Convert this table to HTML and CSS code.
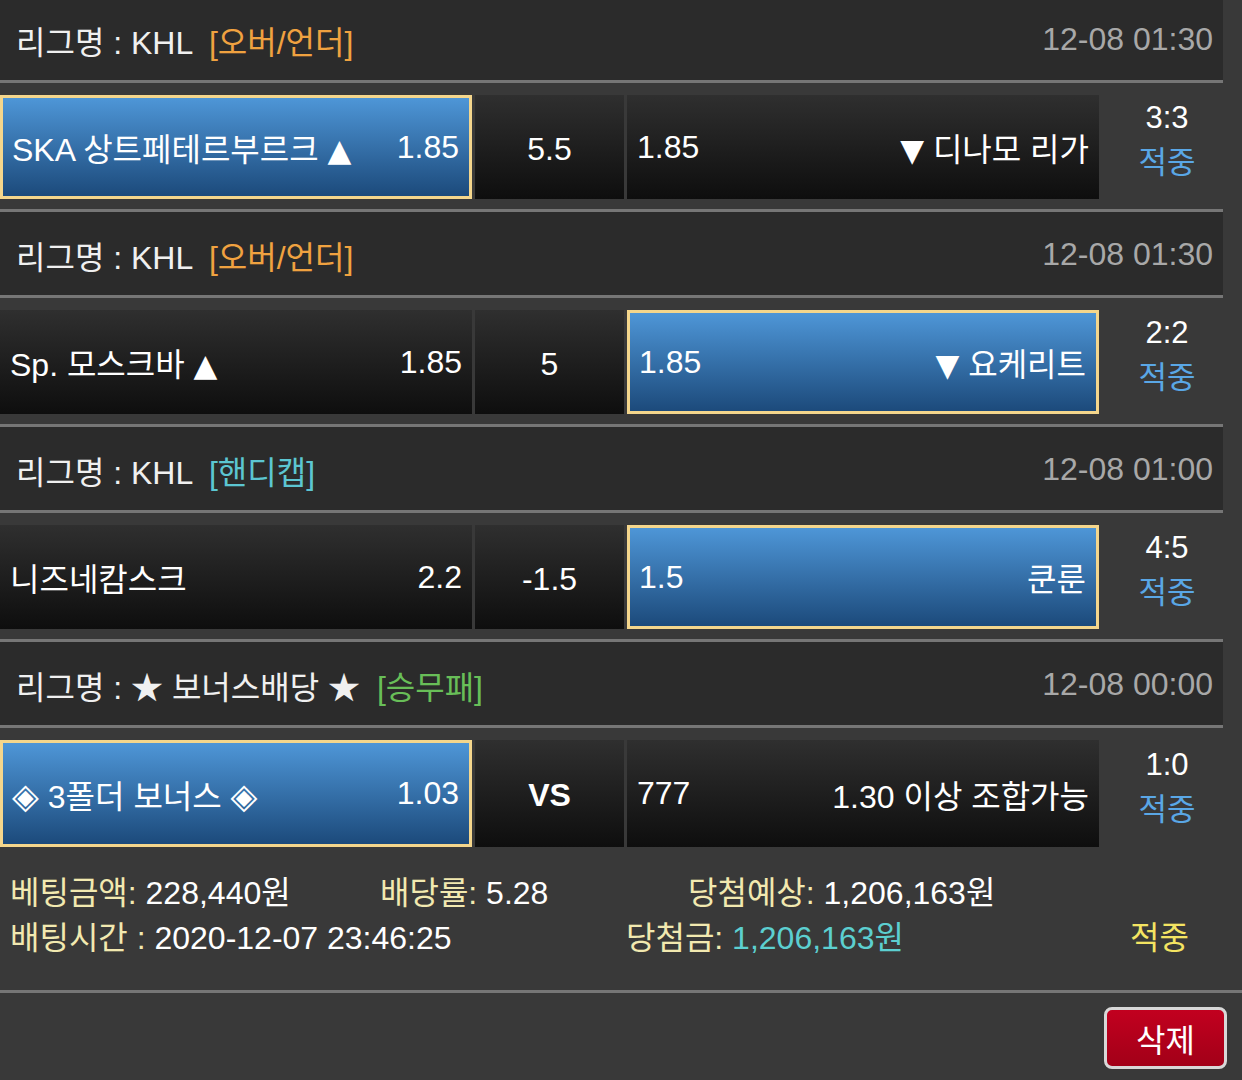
FILE: index.html
```html
<!DOCTYPE html>
<html>
<head>
    <meta charset="utf-8">
    <title>배팅내역</title>
    <link rel="stylesheet" href="styles.css">
</head>
<body>
    <div class="bet-list">
        <div class="league-head">
            <div class="league">리그명 : KHL <span class="type over">[오버/언더]</span></div>
            <div class="date">12-08 01:30</div>
        </div>
        <div class="match">
            <div class="pick on"><span>SKA 상트페테르부르크 <span class="mark">▲</span></span><span>1.85</span></div>
            <div class="line">5.5</div>
            <div class="pick"><span>1.85</span><span><span class="mark">▼</span> 디나모 리가</span></div>
            <div class="result"><span class="score">3:3</span><span class="hit">적중</span></div>
        </div>

        <div class="league-head">
            <div class="league">리그명 : KHL <span class="type over">[오버/언더]</span></div>
            <div class="date">12-08 01:30</div>
        </div>
        <div class="match">
            <div class="pick"><span>Sp. 모스크바 <span class="mark">▲</span></span><span>1.85</span></div>
            <div class="line">5</div>
            <div class="pick on"><span>1.85</span><span><span class="mark">▼</span> 요케리트</span></div>
            <div class="result"><span class="score">2:2</span><span class="hit">적중</span></div>
        </div>

        <div class="league-head">
            <div class="league">리그명 : KHL <span class="type handi">[핸디캡]</span></div>
            <div class="date">12-08 01:00</div>
        </div>
        <div class="match">
            <div class="pick"><span>니즈네캄스크</span><span>2.2</span></div>
            <div class="line">-1.5</div>
            <div class="pick on"><span>1.5</span><span>쿤룬</span></div>
            <div class="result"><span class="score">4:5</span><span class="hit">적중</span></div>
        </div>

        <div class="league-head">
            <div class="league">리그명 : ★ 보너스배당 ★ <span class="type wdl">[승무패]</span></div>
            <div class="date">12-08 00:00</div>
        </div>
        <div class="match last">
            <div class="pick on"><span><span class="mark gem">◈</span> 3폴더 보너스 <span class="mark gem">◈</span></span><span>1.03</span></div>
            <div class="line vs">VS</div>
            <div class="pick"><span>777</span><span>1.30 이상 조합가능</span></div>
            <div class="result"><span class="score">1:0</span><span class="hit">적중</span></div>
        </div>
    </div>

    <div class="summary">
        <div class="sum-row">
            <div class="sum-item w1"><span class="label">베팅금액:</span> 228,440원</div>
            <div class="sum-item w2"><span class="label">배당률:</span> 5.28</div>
            <div class="sum-item"><span class="label">당첨예상:</span> 1,206,163원</div>
        </div>
        <div class="sum-row">
            <div class="sum-item w3"><span class="label">배팅시간 :</span> 2020-12-07 23:46:25</div>
            <div class="sum-item w4"><span class="label">당첨금:</span> <span class="win">1,206,163원</span></div>
            <div class="sum-item status">적중</div>
        </div>
    </div>

    <div class="actions">
        <button class="btn-delete">삭제</button>
    </div>
</body>
</html>
```
FILE: styles.css
```css
* {
    margin: 0;
    padding: 0;
    box-sizing: border-box;
}
body {
    font-family: 'Liberation Sans', 'Noto Sans CJK KR', sans-serif;
    background: #393939;
    color: white;
    overflow: hidden;
}
.bet-list {
    width: 1223px;
    margin-top: -3px;
}
.league-head {
    display: flex;
    justify-content: space-between;
    align-items: center;
    height: 86px;
    padding: 2px 10px 0 16px;
    background: #2b2b2b;
    border-bottom: 3px solid #767676;
    font-size: 32px;
    color: #f0f0f0;
}
.league .type {
    margin-left: 8px;
}
.type.over {
    color: #f0a240;
}
.type.handi {
    color: #5cc6d2;
}
.type.wdl {
    color: #68be58;
}
.date {
    color: #a8a8a8;
}
.match {
    display: flex;
    height: 129px;
    padding: 12px 0 10px;
    border-bottom: 3px solid #767676;
}
.match.last {
    border-bottom: none;
}
.pick {
    display: flex;
    justify-content: space-between;
    align-items: center;
    width: 472px;
    padding: 0 10px;
    background: linear-gradient(#2f2f2f, #0e0e0e);
    font-size: 32px;
}
.pick.on {
    background: linear-gradient(#4e96d7, #1c4a7b);
    border: 3px solid #f4d68c;
    padding: 0 10px 0 9px;
}
.mark {
    font-family: 'DejaVu Sans', sans-serif;
    font-size: 31px;
}
.mark.gem {
    font-size: 35px;
    line-height: 1;
}
.line {
    display: flex;
    justify-content: center;
    align-items: center;
    width: 149px;
    margin: 0 3px;
    padding-top: 4px;
    background: linear-gradient(#2f2f2f, #0e0e0e);
    font-size: 32px;
}
.line.vs {
    font-weight: bold;
}
.result {
    flex: 1;
    display: flex;
    flex-direction: column;
    justify-content: center;
    align-items: center;
    padding: 0 0 14px 12px;
    font-size: 31px;
    line-height: 45px;
}
.result .hit {
    color: #5aa7e6;
}
.summary {
    height: 136px;
    padding: 14px 10px 0;
    border-bottom: 3px solid #767676;
    font-size: 32px;
}
.sum-row {
    display: flex;
    line-height: 45px;
}
.sum-item.w1 {
    width: 370px;
}
.sum-item.w2 {
    width: 308px;
}
.sum-item.w3 {
    width: 616px;
}
.sum-item.w4 {
    width: 504px;
}
.label {
    color: #f2e9b0;
}
.win {
    color: #5ccfd0;
}
.status {
    color: #f4e462;
}
.actions {
    display: flex;
    justify-content: flex-end;
    padding: 14px 15px 0 0;
}
.btn-delete {
    width: 123px;
    height: 62px;
    background: linear-gradient(#c2001f, #a20018);
    border: 3px solid #d8d8d8;
    border-radius: 8px;
    color: white;
    font-family: 'Liberation Sans', 'Noto Sans CJK KR', sans-serif;
    font-size: 32px;
}
```
